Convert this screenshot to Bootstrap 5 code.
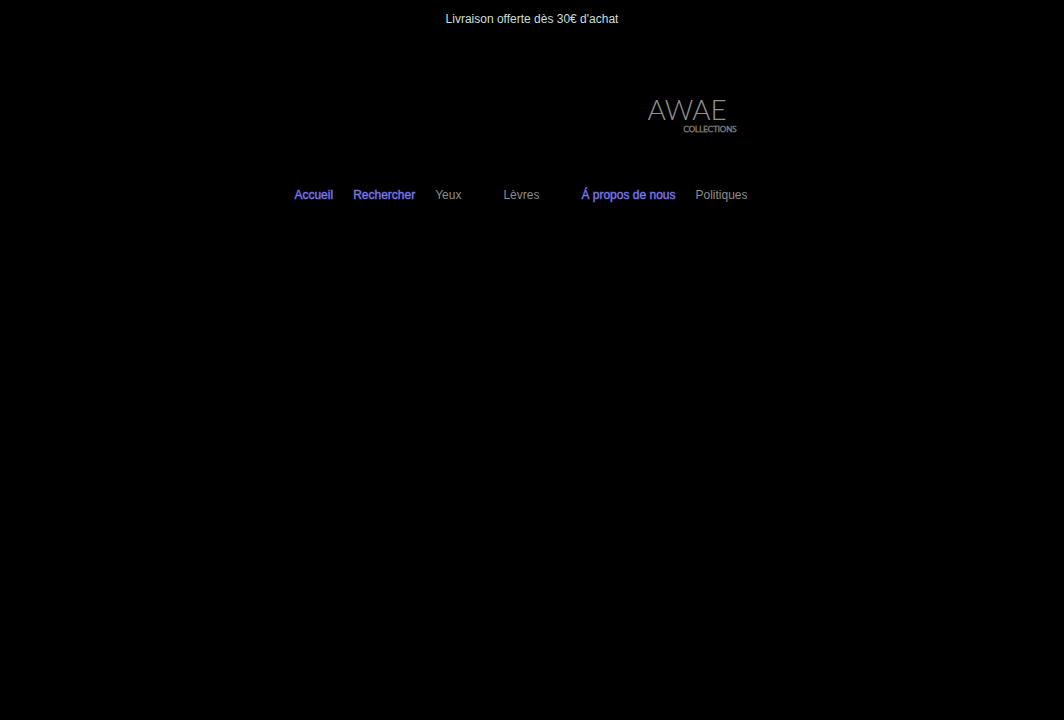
<!DOCTYPE html>
<html lang="fr">
<head>
<meta charset="utf-8">
<meta name="viewport" content="width=device-width, initial-scale=1">
<title>AWAE Collections</title>
<link href="https://cdn.jsdelivr.net/npm/bootstrap@5.3.0/dist/css/bootstrap.min.css" rel="stylesheet">
<style>
  body { background: #000; font-family: "Liberation Sans", Arial, sans-serif; }
  .announcement { color: #c9dfdc; font-size: 12px; line-height: 20px; padding: 9px; }
  .brand-row { padding: 56px 0 52px 320px; }
  .brand { color: #909090; font-family: Lato, sans-serif; font-weight: 300; text-decoration: none; width: 89px; }
  .brand-name { font-size: 28px; line-height: 30px; }
  .brand-sub { font-size: 8px; line-height: 10px; -webkit-text-stroke: 1px #555; paint-order: stroke; }
  .menu { font-size: 12px; line-height: 18px; padding-right: 22px; }
  .menu ul { column-gap: 20px; }
  .menu a { color: #7c7ce4; text-decoration: none; -webkit-text-stroke: 1px #2c2c70; paint-order: stroke; }
  .menu button { color: #8c8c8c; }
  .menu .has-list { padding-right: 22px; }
</style>
</head>
<body>
<div class="announcement text-center">Livraison offerte dès 30€ d'achat</div>
<header>
  <div class="brand-row d-flex justify-content-center">
    <a class="brand d-flex flex-column" href="#"><span class="brand-name">AWAE</span><span class="brand-sub align-self-end">COLLECTIONS</span></a>
  </div>
  <nav class="menu d-flex justify-content-center" aria-label="Menu principal">
    <ul class="list-unstyled d-flex flex-wrap mb-0">
      <li><a href="#">Accueil</a></li>
      <li><a href="#">Rechercher</a></li>
      <li class="has-list"><button class="border-0 bg-transparent p-0" type="button">Yeux</button></li>
      <li class="has-list"><button class="border-0 bg-transparent p-0" type="button">Lèvres</button></li>
      <li><a href="#">Á propos de nous</a></li>
      <li><button class="border-0 bg-transparent p-0" type="button">Politiques</button></li>
    </ul>
  </nav>
</header>
<script src="https://cdn.jsdelivr.net/npm/bootstrap@5.3.0/dist/js/bootstrap.bundle.min.js"></script>
</body>
</html>
